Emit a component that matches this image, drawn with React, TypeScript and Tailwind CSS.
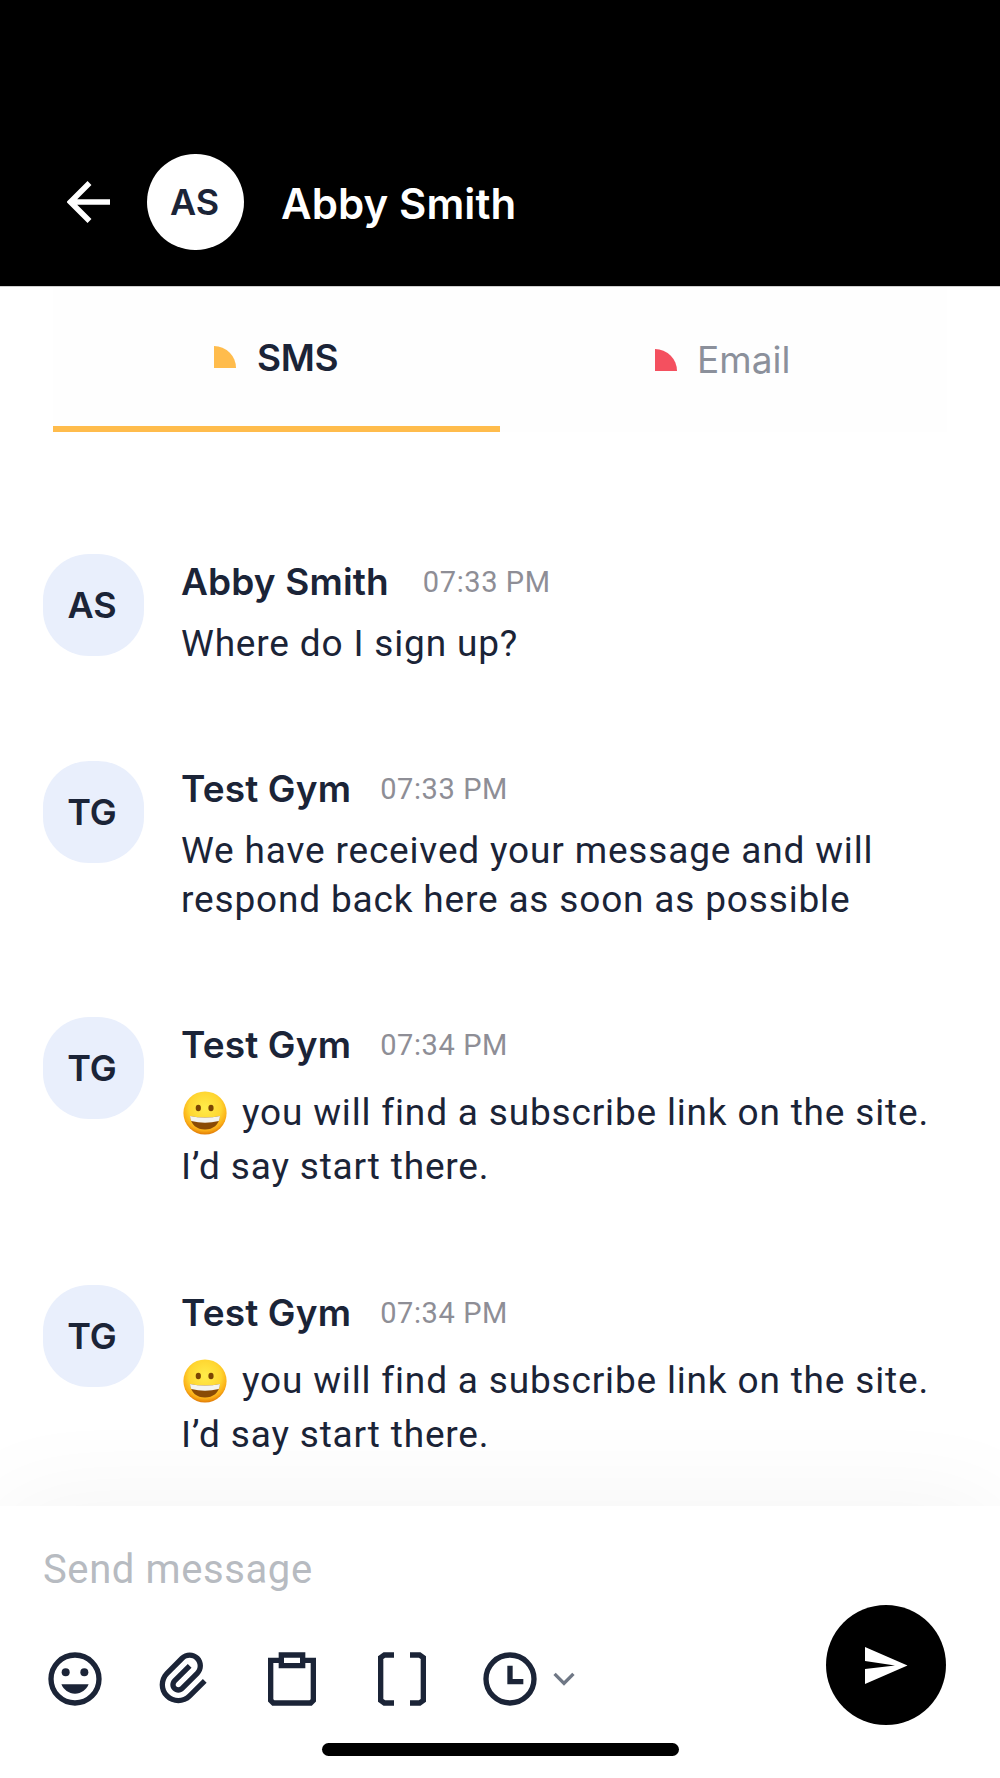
import { RiAttachment2, RiArrowDownSLine } from 'react-icons/ri'

type Message = {
  initials: string
  name: string
  time: string
  lines: string[]
  emoji?: boolean
  incoming?: boolean
}

const messages: Message[] = [
  { initials: 'AS', name: 'Abby Smith', time: '07:33 PM', lines: ['Where do I sign up?'], incoming: true },
  {
    initials: 'TG',
    name: 'Test Gym',
    time: '07:33 PM',
    lines: ['We have received your message and will', 'respond back here as soon as possible'],
  },
  {
    initials: 'TG',
    name: 'Test Gym',
    time: '07:34 PM',
    lines: ['you will find a subscribe link on the site.', 'I’d say start there.'],
    emoji: true,
  },
  {
    initials: 'TG',
    name: 'Test Gym',
    time: '07:34 PM',
    lines: ['you will find a subscribe link on the site.', 'I’d say start there.'],
    emoji: true,
  },
]

function Wedge({ className }: { className: string }) {
  return <span className={`h-[22px] w-[22px] rounded-tr-full ${className}`} />
}

function GrinEmoji() {
  return (
    <svg viewBox="0 0 44 44" className="ml-[2px] mr-[15px] h-11 w-11 shrink-0">
      <defs>
        <radialGradient id="face" cx="50%" cy="38%" r="62%">
          <stop offset="0" stopColor="#ffec4a" />
          <stop offset="0.6" stopColor="#ffd631" />
          <stop offset="0.85" stopColor="#fbae17" />
          <stop offset="1" stopColor="#e07a06" />
        </radialGradient>
      </defs>
      <circle cx="22" cy="22" r="21.6" fill="url(#face)" />
      <ellipse cx="15.3" cy="17" rx="2.6" ry="3.3" fill="#7b4403" />
      <ellipse cx="28" cy="17" rx="2.6" ry="3.3" fill="#7b4403" />
      <path d="M7 25q15 3 30 0C36 34 30 38.500 22 38.500S8 34 7 25z" fill="#8a4b05" />
      <path d="M7 25q15 3 30 0-.2 3-1.300 5Q22 33.500 8.300 30 7.200 28 7 25z" fill="#f4f4f0" />
    </svg>
  )
}

function MessageRow({ message }: { message: Message }) {
  return (
    <article className="flex">
      <div className="flex h-[102px] w-[101px] shrink-0 items-center justify-center rounded-[46px] bg-[#e9effc] pr-[3px] font-[Inter] text-[36px] font-semibold">
        {message.initials}
      </div>
      <div className="ml-[37px] pt-1.5">
        <div className="flex h-11 items-center">
          <h2 className="font-[Inter] text-[37px] font-semibold leading-[44px] tracking-[0.15px]">{message.name}</h2>
          <time
            className={`pt-0.5 font-[Roboto] text-[29px] tracking-[0.6px] text-[#8e8e96] ${message.incoming ? 'ml-[34px]' : 'ml-[29px]'}`}
          >
            {message.time}
          </time>
        </div>
        <div className={message.emoji ? '-mb-0.5 pt-[19px] leading-[54px]' : 'pt-[15px] leading-[49px]'}>
          {message.lines.map((line, i) => (
            <p key={line} className="flex items-center whitespace-nowrap font-[Roboto] text-[37px] tracking-[0.83px]">
              {message.emoji && i === 0 && <GrinEmoji />}
              {line}
            </p>
          ))}
        </div>
      </div>
    </article>
  )
}

export default function App() {
  return (
    <div className="flex h-[1778px] w-[1000px] flex-col overflow-hidden bg-white text-[#1b2437]">
      {/* Header */}
      <header className="flex h-[287px] shrink-0 items-center border-b border-[#cfcfcf] bg-black pl-[67px] pt-[118px]">
        <button aria-label="Back">
          <svg viewBox="0 0 43 42" className="h-[42px] w-[43px]" fill="none" stroke="#fff" strokeWidth="5.500">
            <path d="M43 21H4M22.500 2 3.500 21l19 19" />
          </svg>
        </button>
        <div className="ml-[37px] flex h-24 w-[97px] items-center justify-center rounded-full bg-white pr-0.5 font-[Inter] text-[36px] font-semibold">
          AS
        </div>
        <h1 className="ml-[37px] pt-0.5 font-[Inter] text-[42px] font-semibold tracking-[0.1px] text-white">Abby Smith</h1>
      </header>

      {/* Channel tabs */}
      <nav className="mx-[53px] flex h-[145px] shrink-0 bg-[#fefefe]">
        <button className="flex w-[447px] items-center border-b-[6px] border-[#ffbc4c] pl-[161px]">
          <Wedge className="bg-[#ffbc4c]" />
          <span className="ml-[21px] pt-0.5 font-[Inter] text-[37px] font-semibold tracking-[-0.3px]">SMS</span>
        </button>
        <button className="flex flex-1 items-center pl-[155px]">
          <Wedge className="bg-[#f4505f]" />
          <span className="ml-[20px] font-[Inter] text-[37px] text-[#8b909b]">Email</span>
        </button>
      </nav>

      {/* Conversation */}
      <main className="flex flex-1 flex-col gap-[93px] pl-[43px] pt-[122px]">
        {messages.map((message, i) => (
          <MessageRow key={i} message={message} />
        ))}
      </main>

      {/* Composer */}
      <footer className="flex h-[272px] shrink-0 flex-col bg-white shadow-[0_0_110px_rgba(0,0,0,0.05)]">
        <p className="ml-[43px] mt-[38px] font-[Roboto] text-[40px] leading-[51px] tracking-[0.6px] text-[#b7bbc1]">
          Send message
        </p>
        <div className="ml-[43px] mt-[10px] flex h-[120px] items-center">
          <svg viewBox="0 0 24 24" className="mt-[27px] h-16 w-16" fill="currentColor">
            <circle cx="12" cy="12" r="9" fill="none" stroke="currentColor" strokeWidth="2" />
            <circle cx="8.500" cy="9.500" r="1.500" />
            <circle cx="15.500" cy="9.500" r="1.500" />
            <path d="M12 17.500c2.330 0 4.310-1.460 5.110-3.500H6.890c.8 2.040 2.780 3.500 5.110 3.500z" />
          </svg>
          <RiAttachment2 className="ml-[45px] mt-[27px] h-16 w-16" />
          <svg viewBox="0 0 24 24" className="ml-[44px] mt-[27px] h-16 w-16" fill="none" stroke="currentColor" strokeWidth="2">
            <path d="M8 5H4v15l1 1h14l1-1V5h-4" />
            <path d="M8 3h8v4H8z" />
          </svg>
          <svg viewBox="0 0 24 24" className="ml-[46px] mt-[27px] h-16 w-16" fill="none" stroke="currentColor" strokeWidth="2">
            <path d="M9 3H5.400L4 4v16l1.400 1H9M15 3h3.600L20 4v16l-1.400 1H15" />
          </svg>
          <svg viewBox="0 0 24 24" className="ml-[44px] mt-[27px] h-16 w-16" fill="none" stroke="currentColor" strokeWidth="2">
            <circle cx="12" cy="12" r="9" />
            <path d="M12 7v6h5" />
          </svg>
          <RiArrowDownSLine className="ml-0.5 mt-[27px] h-10 w-10 text-[#6f7785]" />
          <button
            aria-label="Send"
            className="ml-[242px] flex h-[120px] w-[120px] items-center justify-center rounded-full bg-black"
          >
            <svg viewBox="0 0 43 37" className="h-[37px] w-[43px]" fill="#fff">
              <path d="M0 0l42.500 18.500L0 37V22l30-3.500L0 14z" />
            </svg>
          </button>
        </div>
        <div className="ml-[322px] mt-[18px] h-[13px] w-[357px] rounded-full bg-black" />
      </footer>
    </div>
  )
}
